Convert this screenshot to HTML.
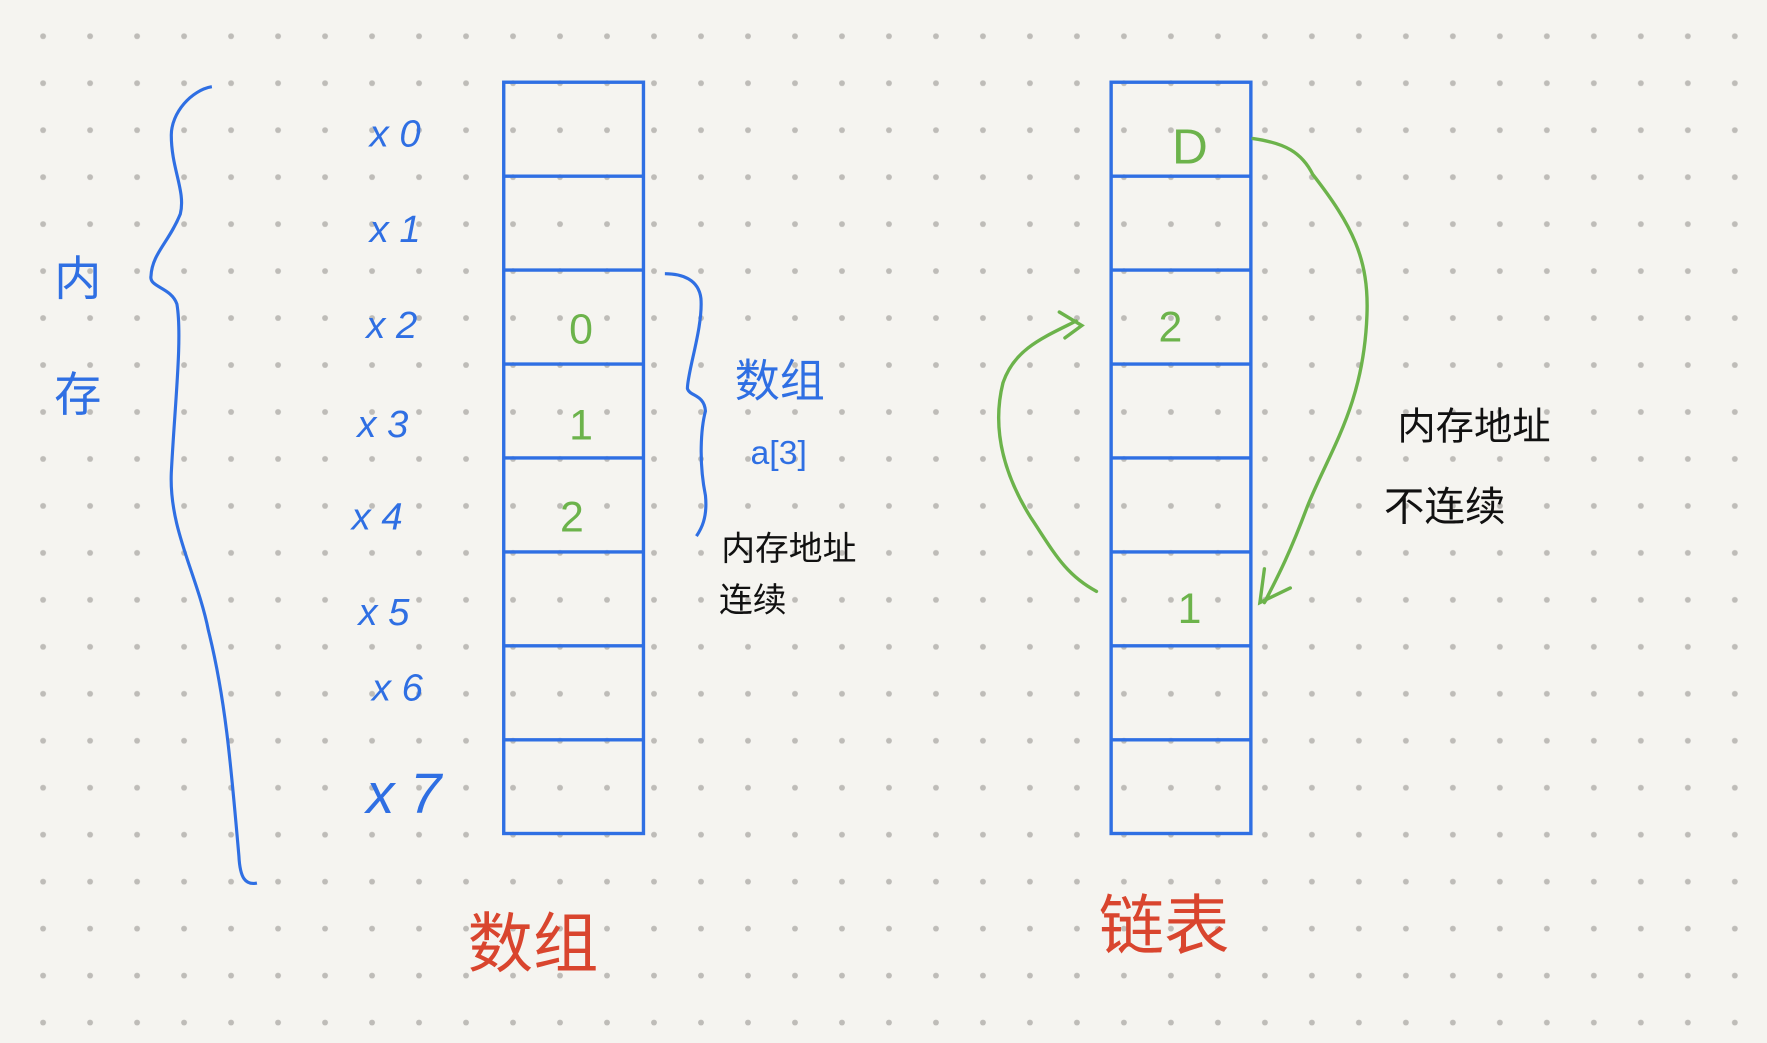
<!DOCTYPE html>
<html><head><meta charset="utf-8"><style>
html,body{margin:0;padding:0;background:#f5f4f0;overflow:hidden}
svg{display:block}
text{font-family:"Liberation Sans","Noto Sans CJK SC",sans-serif}
</style></head><body>
<svg width="1767" height="1043" viewBox="0 0 1568 926" preserveAspectRatio="none" xmlns="http://www.w3.org/2000/svg">
<defs>
<pattern id="d" x="17.4" y="11.3" width="41.7" height="41.7" patternUnits="userSpaceOnUse">
<circle cx="20.85" cy="20.85" r="2.6" fill="#bebcb8"/></pattern>
</defs>
<rect width="1568" height="926" fill="#f5f4f0"/>
<rect width="1568" height="926" fill="url(#d)"/>
<g fill="none" stroke="#2f6fe3" stroke-width="3">
<rect x="447" y="73" width="124" height="667"/>
<path d="M447 156.4H571M447 239.8H571M447 323.2H571M447 406.6H571M447 490H571M447 573.4H571M447 656.8H571"/>
<rect x="986" y="73" width="124" height="667"/>
<path d="M986 156.4H1110M986 239.8H1110M986 323.2H1110M986 406.6H1110M986 490H1110M986 573.4H1110M986 656.8H1110"/>
<path d="M188 77C170 80 152 100 152 120C152 150 165 170 160 190C150 215 135 225 134 245C132 255 152 255 157 270C162 300 155 360 152 420C150 470 175 510 185 560C200 620 205 680 212 760C213 780 218 786 228 784" stroke-width="2.8"/>
<path d="M590 243C605 243 620 248 622 265C624 290 610 330 610 345C612 352 625 350 626 365C622 380 620 410 626 440C628 460 622 470 618 476" stroke-width="2.8"/>
</g>
<g fill="none" stroke="#6cb34b" stroke-width="3" stroke-linecap="round">
<path d="M1112 123C1140 127 1155 135 1165 155C1200 200 1215 230 1213 280C1210 360 1180 400 1160 450C1145 490 1135 510 1122 535"/>
<path d="M1122 505L1118 535L1145 522"/>
<path d="M973 525C945 510 935 490 915 460C890 420 880 380 890 340C900 310 925 300 955 285"/>
<path d="M940 277L960 289L945 300"/>
</g>
<g fill="#2f6fe3" font-size="34" font-style="italic">
<text x="328" y="130">x 0</text><text x="328" y="215">x 1</text>
<text x="325" y="300">x 2</text><text x="317" y="388">x 3</text>
<text x="312" y="470">x 4</text><text x="318" y="555">x 5</text>
<text x="330" y="622">x 6</text><text x="325" y="722" font-size="50">x 7</text>
<text x="48" y="262" font-size="42" font-style="normal">内</text>
<text x="48" y="365" font-size="42" font-style="normal">存</text>
<text x="652" y="352" font-size="40" font-style="normal">数组</text>
<text x="666" y="412" font-size="30" font-style="normal">a[3]</text>
</g>
<g fill="#6cb34b" font-size="38">
<text x="505" y="305">0</text><text x="505" y="390">1</text><text x="497" y="472">2</text>
<text x="1040" y="145" font-size="44">D</text><text x="1028" y="303">2</text><text x="1045" y="553">1</text>
</g>
<g fill="#111" font-size="30">
<text x="640" y="497">内存地址</text><text x="638" y="543">连续</text>
<text x="1240" y="390" font-size="34">内存地址</text><text x="1228" y="462" font-size="36">不连续</text>
</g>
<g fill="#d9452e" font-size="58">
<text x="415" y="858">数组</text><text x="975" y="842">链表</text>
</g>
</svg>
</body></html>
